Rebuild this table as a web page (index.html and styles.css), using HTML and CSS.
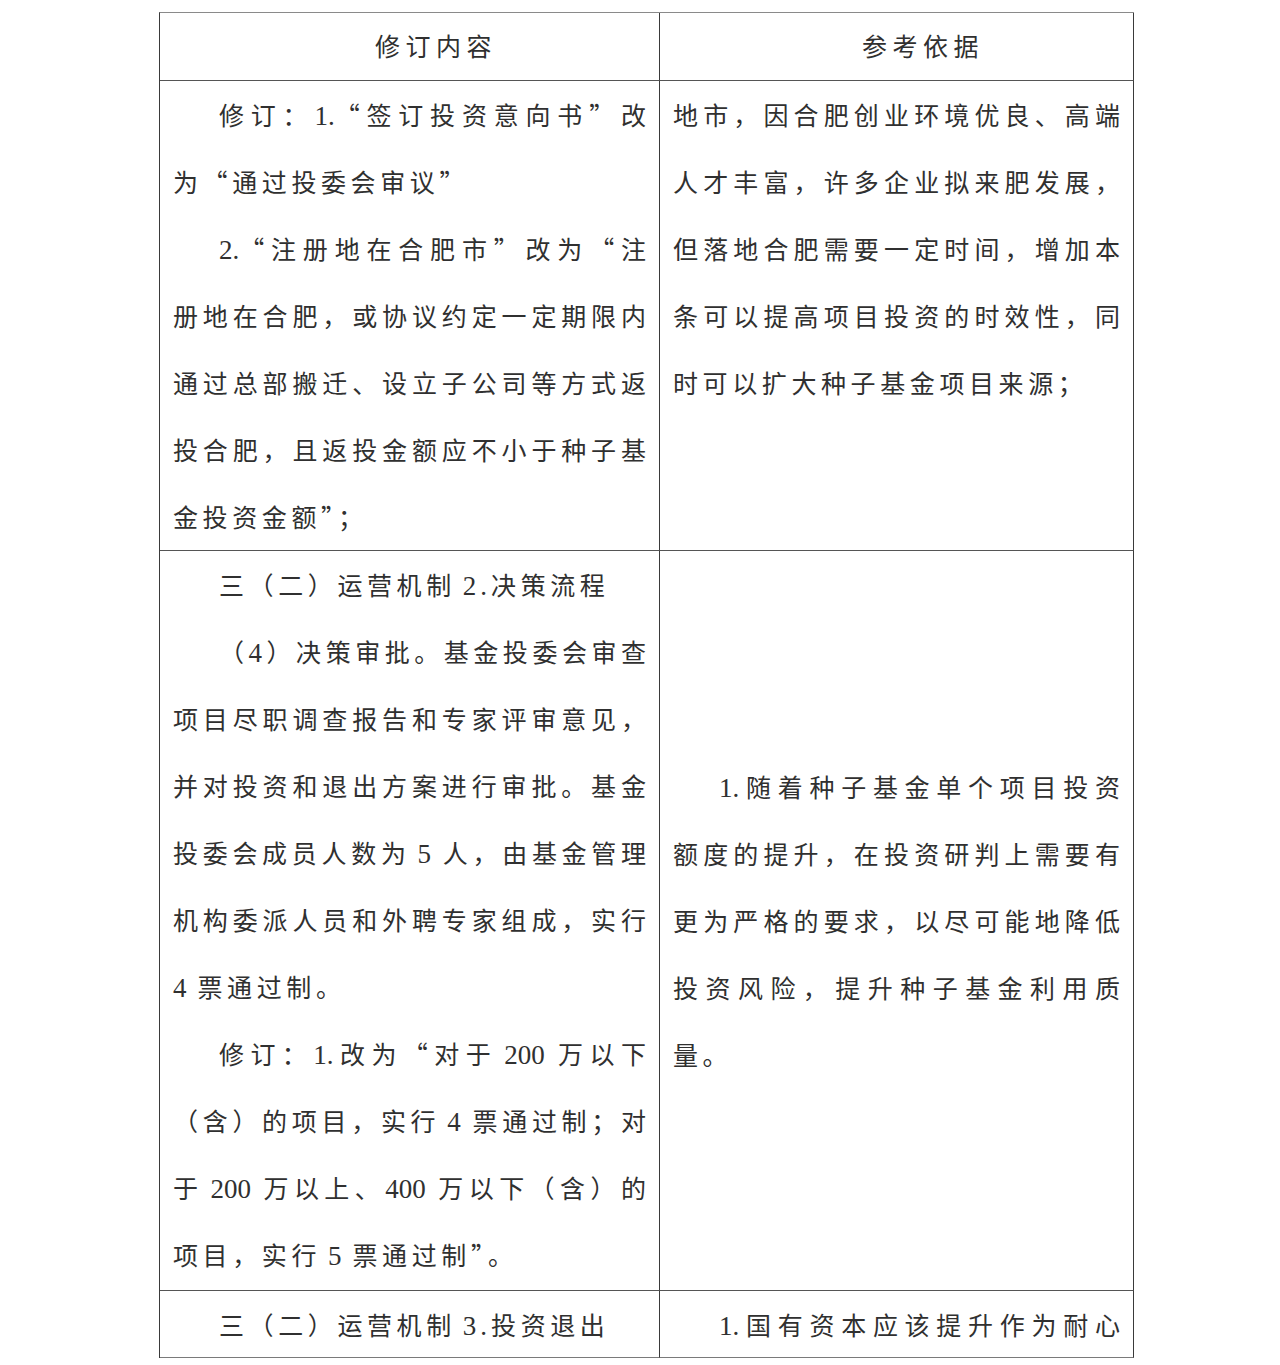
FILE: index.html
```html
<!DOCTYPE html>
<html lang="zh-CN">
<head>
<meta charset="utf-8">
<title>修订内容与参考依据</title>
<link rel="stylesheet" href="styles.css">
</head>
<body>
<div class="sheet">
  <div class="cell head">修订内容</div>
  <div class="cell head">参考依据</div>

  <div class="cell r2">
    <span class="ln j ind">修订：<span class="num">1.</span>“签订投资意向书”改</span>
    <span class="ln">为“通过投委会审议”</span>
    <span class="ln j ind"><span class="num">2.</span>“注册地在合肥市”改为“注</span>
    <span class="ln j">册地在合肥，或协议约定一定期限内</span>
    <span class="ln j">通过总部搬迁、设立子公司等方式返</span>
    <span class="ln j">投合肥，且返投金额应不小于种子基</span>
    <span class="ln">金投资金额”；</span>
  </div>
  <div class="cell r2">
    <span class="ln j">地市，因合肥创业环境优良、高端</span>
    <span class="ln j">人才丰富，许多企业拟来肥发展，</span>
    <span class="ln j">但落地合肥需要一定时间，增加本</span>
    <span class="ln j">条可以提高项目投资的时效性，同</span>
    <span class="ln">时可以扩大种子基金项目来源；</span>
  </div>

  <div class="cell r3">
    <span class="ln ind">三（二）运营机制<span class="num sl">2.</span>决策流程</span>
    <span class="ln j ind">（<span class="num">4</span>）决策审批。基金投委会审查</span>
    <span class="ln j">项目尽职调查报告和专家评审意见，</span>
    <span class="ln j">并对投资和退出方案进行审批。基金</span>
    <span class="ln j">投委会成员人数为<span class="num sl sr">5</span>人，由基金管理</span>
    <span class="ln j">机构委派人员和外聘专家组成，实行</span>
    <span class="ln"><span class="num sr">4</span>票通过制。</span>
    <span class="ln j ind">修订：<span class="num">1.</span>改为“对于<span class="num sl sr">200</span>万以下</span>
    <span class="ln j">（含）的项目，实行<span class="num sl sr">4</span>票通过制；对</span>
    <span class="ln j">于<span class="num sl sr">200</span>万以上、<span class="num sr">400</span>万以下（含）的</span>
    <span class="ln">项目，实行<span class="num sl sr">5</span>票通过制”。</span>
  </div>
  <div class="cell r3 mid">
    <span class="ln j ind"><span class="num">1.</span>随着种子基金单个项目投资</span>
    <span class="ln j">额度的提升，在投资研判上需要有</span>
    <span class="ln j">更为严格的要求，以尽可能地降低</span>
    <span class="ln j">投资风险，提升种子基金利用质</span>
    <span class="ln">量。</span>
  </div>

  <div class="cell r4">
    <span class="ln ind">三（二）运营机制<span class="num sl">3.</span>投资退出</span>
  </div>
  <div class="cell r4">
    <span class="ln j ind"><span class="num">1.</span>国有资本应该提升作为耐心</span>
  </div>
</div>
</body>
</html>
```

FILE: styles.css
```css
html, body {
  margin: 0;
  padding: 0;
  background: #ffffff;
}

body {
  font-family: "Noto Sans CJK SC", sans-serif;
  font-size: 25px;
  color: #303030;
}

.sheet {
  display: grid;
  grid-template-columns: 500px 474px;
  grid-template-rows: 68px 470px 740px 67px;
  width: 974px;
  margin: 12px 0 0 159px;
  border-left: 1px solid #3a3a3a;
  border-top: 1px solid #8a8a8a;
}

.cell {
  box-sizing: border-box;
  border-right: 1px solid #3a3a3a;
  border-bottom: 1px solid #555555;
  padding: 0 13px;
  line-height: 67px;
  letter-spacing: 4.6px;
}

.head {
  text-align: center;
  letter-spacing: 5.5px;
  padding-left: 66px;
  line-height: 65px;
}

.r4 {
  border-bottom-color: #7a7a7a;
  line-height: 66px;
}

.r2,
.r3 {
  padding-top: 0;
}

.mid {
  display: flex;
  flex-direction: column;
  justify-content: center;
}

.ln {
  display: block;
  white-space: nowrap;
}

.ln.j {
  white-space: normal;
  letter-spacing: 0;
  text-align: justify;
  text-align-last: justify;
}

.num {
  font-family: "Liberation Serif", serif;
  font-size: 27px;
  line-height: 1;
  letter-spacing: 0;
}

.ln:not(.j) .num {
  letter-spacing: 4px;
}

.sl {
  margin-left: 7px;
}

.sr {
  margin-right: 7px;
}

.ind {
  padding-left: 46px;
}
```
